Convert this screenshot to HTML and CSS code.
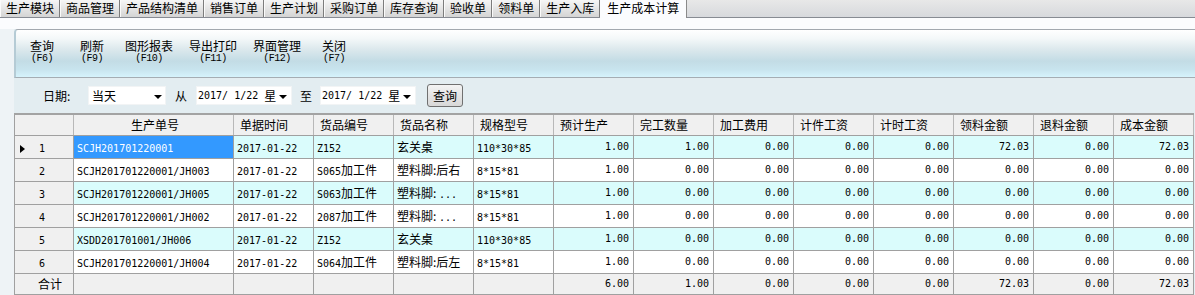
FILE: index.html
```html
<!DOCTYPE html>
<html lang="zh-CN">
<head>
  <meta charset="UTF-8" />
  <title>生产成本计算</title>
  <link rel="stylesheet" href="styles.css">
</head>
<body>

  <!-- 顶部模块标签 -->
  <div class="tabbar">
    <div class="tab">生产模块</div>
    <div class="tab">商品管理</div>
    <div class="tab">产品结构清单</div>
    <div class="tab">销售订单</div>
    <div class="tab">生产计划</div>
    <div class="tab">采购订单</div>
    <div class="tab">库存查询</div>
    <div class="tab">验收单</div>
    <div class="tab">领料单</div>
    <div class="tab">生产入库</div>
    <div class="tab active">生产成本计算</div>
  </div>

  <div class="gap"></div>

  <div class="page">
    <div class="panel">

      <!-- 工具栏 -->
      <div class="toolbar">
        <div class="tool"><span class="tool-name">查询</span><span class="tool-key">(F6)</span></div>
        <div class="tool"><span class="tool-name">刷新</span><span class="tool-key">(F9)</span></div>
        <div class="tool"><span class="tool-name">图形报表</span><span class="tool-key">(F10)</span></div>
        <div class="tool"><span class="tool-name">导出打印</span><span class="tool-key">(F11)</span></div>
        <div class="tool"><span class="tool-name">界面管理</span><span class="tool-key">(F12)</span></div>
        <div class="tool"><span class="tool-name">关闭</span><span class="tool-key">(F7)</span></div>
      </div>

      <!-- 查询条件 -->
      <div class="filter">
        <span class="lbl">日期:</span>
        <div class="combo range"><span>当天</span><i class="arrow"></i></div>
        <span class="word from">从</span>
        <div class="combo date"><span class="m">2017/ 1/22</span><span class="wk">星</span><i class="arrow"></i></div>
        <span class="word to">至</span>
        <div class="combo date"><span class="m">2017/ 1/22</span><span class="wk">星</span><i class="arrow"></i></div>
        <button class="btn">查询</button>
      </div>

      <!-- 数据表 -->
      <table class="grid">
        <colgroup>
          <col style="width:59px">
          <col style="width:160px">
          <col span="12" style="width:80px">
        </colgroup>
        <thead>
          <tr>
            <th class="ind"></th>
            <th class="center">生产单号</th>
            <th>单据时间</th>
            <th>货品编号</th>
            <th>货品名称</th>
            <th>规格型号</th>
            <th>预计生产</th>
            <th>完工数量</th>
            <th>加工费用</th>
            <th>计件工资</th>
            <th>计时工资</th>
            <th>领料金额</th>
            <th>退料金额</th>
            <th>成本金额</th>
          </tr>
        </thead>
        <tbody>
          <tr class="odd">
            <td class="ind"><i class="cur"></i><span class="m">1</span></td>
            <td class="sel"><span class="m">SCJH201701220001</span></td>
            <td><span class="m">2017-01-22</span></td>
            <td><span class="m">Z152</span></td>
            <td>玄关桌</td>
            <td><span class="m">110*30*85</span></td>
            <td class="n">1.00</td><td class="n">1.00</td><td class="n">0.00</td><td class="n">0.00</td>
            <td class="n">0.00</td><td class="n">72.03</td><td class="n">0.00</td><td class="n">72.03</td>
          </tr>
          <tr>
            <td class="ind"><span class="m">2</span></td>
            <td><span class="m">SCJH201701220001/JH003</span></td>
            <td><span class="m">2017-01-22</span></td>
            <td><span class="m">S065</span>加工件</td>
            <td>塑料脚:后右</td>
            <td><span class="m">8*15*81</span></td>
            <td class="n">1.00</td><td class="n">0.00</td><td class="n">0.00</td><td class="n">0.00</td>
            <td class="n">0.00</td><td class="n">0.00</td><td class="n">0.00</td><td class="n">0.00</td>
          </tr>
          <tr class="odd">
            <td class="ind"><span class="m">3</span></td>
            <td><span class="m">SCJH201701220001/JH005</span></td>
            <td><span class="m">2017-01-22</span></td>
            <td><span class="m">S063</span>加工件</td>
            <td>塑料脚: <span class="m">...</span></td>
            <td><span class="m">8*15*81</span></td>
            <td class="n">1.00</td><td class="n">0.00</td><td class="n">0.00</td><td class="n">0.00</td>
            <td class="n">0.00</td><td class="n">0.00</td><td class="n">0.00</td><td class="n">0.00</td>
          </tr>
          <tr>
            <td class="ind"><span class="m">4</span></td>
            <td><span class="m">SCJH201701220001/JH002</span></td>
            <td><span class="m">2017-01-22</span></td>
            <td><span class="m">2087</span>加工件</td>
            <td>塑料脚: <span class="m">...</span></td>
            <td><span class="m">8*15*81</span></td>
            <td class="n">1.00</td><td class="n">0.00</td><td class="n">0.00</td><td class="n">0.00</td>
            <td class="n">0.00</td><td class="n">0.00</td><td class="n">0.00</td><td class="n">0.00</td>
          </tr>
          <tr class="odd">
            <td class="ind"><span class="m">5</span></td>
            <td><span class="m">XSDD201701001/JH006</span></td>
            <td><span class="m">2017-01-22</span></td>
            <td><span class="m">Z152</span></td>
            <td>玄关桌</td>
            <td><span class="m">110*30*85</span></td>
            <td class="n">1.00</td><td class="n">0.00</td><td class="n">0.00</td><td class="n">0.00</td>
            <td class="n">0.00</td><td class="n">0.00</td><td class="n">0.00</td><td class="n">0.00</td>
          </tr>
          <tr>
            <td class="ind"><span class="m">6</span></td>
            <td><span class="m">SCJH201701220001/JH004</span></td>
            <td><span class="m">2017-01-22</span></td>
            <td><span class="m">S064</span>加工件</td>
            <td>塑料脚:后左</td>
            <td><span class="m">8*15*81</span></td>
            <td class="n">1.00</td><td class="n">0.00</td><td class="n">0.00</td><td class="n">0.00</td>
            <td class="n">0.00</td><td class="n">0.00</td><td class="n">0.00</td><td class="n">0.00</td>
          </tr>
          <tr class="total">
            <td class="ind sum">合计</td>
            <td></td><td></td><td></td><td></td><td></td>
            <td class="n">6.00</td><td class="n">1.00</td><td class="n">0.00</td><td class="n">0.00</td>
            <td class="n">0.00</td><td class="n">72.03</td><td class="n">0.00</td><td class="n">72.03</td>
          </tr>
        </tbody>
      </table>

    </div>
  </div>

</body>
</html>
```

FILE: styles.css
```css
* {
  box-sizing: border-box;
  margin: 0;
  padding: 0;
}

body {
  font-family: "Noto Sans CJK SC", "Liberation Sans", sans-serif;
  font-size: 12px;
  color: #000;
  background: #eef3f6;
  width: 1195px;
  height: 295px;
  overflow: hidden;
}

.m {
  font-family: "DejaVu Sans Mono", "Liberation Mono", monospace;
  font-size: 10px;
}

/* 标签栏 */
.tabbar {
  display: flex;
  height: 18px;
  background: linear-gradient(#e8e8e8, #d7d9dd);
  border-bottom: 1px solid #878b93;
}

.tab {
  height: 17px;
  line-height: 16px;
  padding: 0 5px;
  background: linear-gradient(#f6f6f6, #d4d4d4);
  border-left: 1px solid #fafafa;
  border-right: 1px solid #7c7c7c;
  white-space: nowrap;
}

.tab.active {
  height: 18px;
  padding: 0 7px;
  background: #fbfcfe;
  border-left: none;
  border-right: 1px solid #8a8a8a;
}

.gap {
  height: 11px;
  background: #fbfcfe;
}

.page {
  padding-left: 14px;
}

.panel {
  background: #e3edf1;
  height: 266px;
}

/* 工具栏 */
.toolbar {
  display: flex;
  height: 49px;
  padding: 9px 0 0 1px;
  border-top: 1px solid #a2a8af;
  border-bottom: 1px solid #a5adb3;
  border-left: 2px solid #b5cbd5;
  border-top-left-radius: 4px;
  background: linear-gradient(#ffffff 0%, #f4f8f9 18%, #dde9ed 40%, #c3dce5 66%, #c8e4ee 84%, #d6f3fc 100%);
}

.tool {
  display: flex;
  flex-direction: column;
  align-items: center;
  min-width: 50px;
  padding: 0 8px;
}

.tool-name {
  line-height: 14px;
}

.tool-key {
  font-family: "Liberation Mono", monospace;
  font-size: 10px;
  line-height: 11px;
  letter-spacing: -0.5px;
}

/* 查询条件 */
.filter {
  display: flex;
  align-items: center;
  height: 35px;
  padding-left: 29px;
}

.lbl {
  width: 45px;
}

.combo {
  display: flex;
  align-items: center;
  height: 19px;
  background: #fff;
  border: 1px solid #f2f4f5;
  position: relative;
}

.combo.range {
  width: 78px;
  padding-left: 3px;
}

.combo.date {
  width: 96px;
  padding-left: 1px;
}

.combo .wk {
  margin-left: 6px;
}

.arrow {
  position: absolute;
  right: 4px;
  top: 8px;
  width: 0;
  height: 0;
  border-left: 4px solid transparent;
  border-right: 4px solid transparent;
  border-top: 4px solid #000;
}

.combo.range .arrow {
  right: 3px;
}

.word.from {
  margin: 0 9px;
}

.word.to {
  margin: 0 8px;
}

.btn {
  margin-left: 11px;
  width: 36px;
  height: 23px;
  font-family: "Noto Sans CJK SC", sans-serif;
  font-size: 12px;
  color: #000;
  border: 1px solid #707070;
  border-radius: 3px;
  background: linear-gradient(#f4f4f4, #e4e4e4 50%, #d8d8d8);
}

/* 表格 */
.grid {
  border-collapse: collapse;
  table-layout: fixed;
  width: 1180px;
  border-top: 2px solid #a3a3a3;
  border-left: 1px solid #8e8e8e;
}

.grid th,
.grid td {
  height: 23px;
  padding: 0 3px;
  border: 1px solid #a0a0a0;
  white-space: nowrap;
  overflow: hidden;
  text-align: left;
  font-weight: normal;
  background: #fff;
}

.grid th {
  height: 21px;
  padding-left: 6px;
  background: #f0f0f0;
  border-top: none;
  border-right-color: #b8b8b8;
}

.grid th.center {
  text-align: center;
}

.grid tr.odd td {
  background: #dafcfc;
}

.grid td.n {
  text-align: right;
  font-family: "DejaVu Sans Mono", "Liberation Mono", monospace;
  font-size: 10px;
  padding-right: 4px;
}

.grid td.ind,
.grid tr.odd td.ind {
  background: #f0f0f0;
  padding-left: 5px;
}

.grid td.sum {
  padding-left: 23px;
}

.cur {
  display: inline-block;
  width: 0;
  height: 0;
  margin-right: 14px;
  border-top: 4px solid transparent;
  border-bottom: 4px solid transparent;
  border-left: 5px solid #000;
  vertical-align: -1px;
}

.grid td.ind .m {
  display: inline-block;
}

.grid tr:not(:first-child) td.ind .m {
  margin-left: 19px;
}

.grid tr.odd td.sel {
  background: #3399ff;
  color: #fff;
}

.grid tr.total td {
  height: 21px;
  background: #f0f0f0;
}
```
